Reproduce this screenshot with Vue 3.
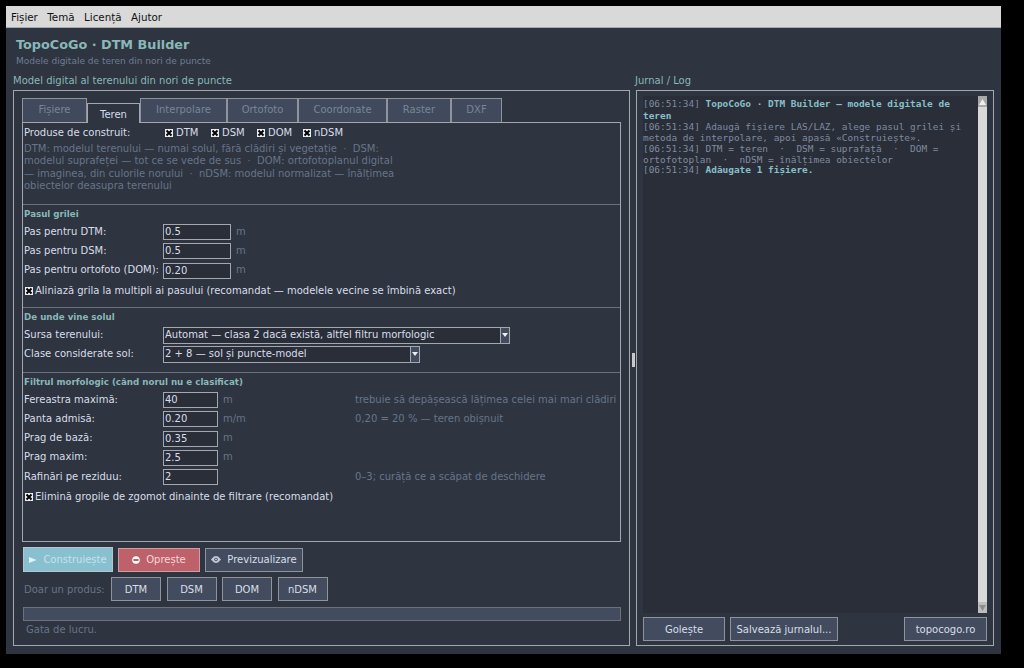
<template>
  <div class="window">
    <div class="menubar">
      <span v-for="m in menus" :key="m">{{ m }}</span>
    </div>

    <div class="header">
      <div class="title">TopoCoGo · DTM Builder</div>
      <div class="subtitle">Modele digitale de teren din nori de puncte</div>
    </div>

    <div class="columns">
      <!-- left side -->
      <div class="left-col">
        <div class="group-title">Model digital al terenului din nori de puncte</div>
        <div class="panel left-panel">
          <div class="tabs">
            <div
              v-for="t in tabs"
              :key="t.name"
              class="tab"
              :class="{ active: t.name === 'Teren' }"
              :style="{ width: t.w + 'px' }"
            >{{ t.name }}</div>
          </div>

          <div class="pane">
            <div class="section first">
              <div class="products">
                <span class="products-label">Produse de construit:</span>
                <label v-for="p in products" :key="p" class="check product">
                  <span class="box"><svg viewBox="0 0 8 8" width="8" height="8"><path d="M1.5 1.5l5 5M6.5 1.5l-5 5" stroke="#000" stroke-width="2" /></svg></span>{{ p }}
                </label>
              </div>
              <p class="desc">DTM: modelul terenului — numai solul, fără clădiri și vegetație &nbsp;·&nbsp; DSM: modelul suprafeței — tot ce se vede de sus &nbsp;·&nbsp; DOM: ortofotoplanul digital — imaginea, din culorile norului &nbsp;·&nbsp; nDSM: modelul normalizat — înălțimea obiectelor deasupra terenului</p>
            </div>

            <div class="section grid-section">
              <h4>Pasul grilei</h4>
              <div v-for="r in gridRows" :key="r.label" class="row">
                <span class="lbl">{{ r.label }}</span>
                <span class="input wide">{{ r.value }}</span>
                <span class="unit">m</span>
              </div>
              <label class="check line">
                <span class="box"><svg viewBox="0 0 8 8" width="8" height="8"><path d="M1.5 1.5l5 5M6.5 1.5l-5 5" stroke="#000" stroke-width="2" /></svg></span>Aliniază grila la multipli ai pasului (recomandat — modelele vecine se îmbină exact)
              </label>
            </div>

            <div class="section soil-section">
              <h4>De unde vine solul</h4>
              <div v-for="s in soilRows" :key="s.label" class="row">
                <span class="lbl">{{ s.label }}</span>
                <div class="select" :style="{ width: s.w + 'px' }">
                  <span class="select-text">{{ s.value }}</span>
                  <span class="select-arrow"><svg viewBox="0 0 6 4" width="6" height="4"><path d="M0 0h6L3 4z" fill="#eceff4" /></svg></span>
                </div>
              </div>
            </div>

            <div class="section last">
              <h4>Filtrul morfologic (când norul nu e clasificat)</h4>
              <div v-for="r in filterRows" :key="r.label" class="row">
                <span class="lbl">{{ r.label }}</span>
                <span class="input narrow">{{ r.value }}</span>
                <span class="unit fixed">{{ r.unit }}</span>
                <span class="hint">{{ r.hint }}</span>
              </div>
              <label class="check line">
                <span class="box"><svg viewBox="0 0 8 8" width="8" height="8"><path d="M1.5 1.5l5 5M6.5 1.5l-5 5" stroke="#000" stroke-width="2" /></svg></span>Elimină gropile de zgomot dinainte de filtrare (recomandat)
              </label>
            </div>
          </div>

          <div class="actions">
            <button class="btn build">
              <svg viewBox="0 0 8 8" width="8" height="8"><path d="M0 1l7.5 3L0 7z" fill="#e4f2f6" /></svg>
              Construiește
            </button>
            <button class="btn stop">
              <svg viewBox="0 0 8 8" width="8" height="8"><circle cx="4" cy="4" r="3.8" fill="#fff" /><rect x="1.5" y="3" width="5" height="2" fill="#bf616a" /></svg>
              Oprește
            </button>
            <button class="btn preview">
              <svg viewBox="0 0 10 7" width="10" height="7"><path d="M0 3.5C2 1 3.5 0 5 0s3 1 5 3.5C8 6 6.5 7 5 7S2 6 0 3.5z" fill="#c3cad6" /><circle cx="5" cy="3.5" r="1.8" fill="#4c566a" /><circle cx="5" cy="3.5" r="0.8" fill="#e5e9f0" /></svg>
              Previzualizare
            </button>
          </div>

          <div class="only">
            <span class="only-label">Doar un produs:</span>
            <button v-for="p in products" :key="p" class="btn small">{{ p }}</button>
          </div>

          <div class="progress"></div>
          <div class="status">Gata de lucru.</div>
        </div>
      </div>

      <div class="splitter"><span class="grip"></span></div>

      <!-- log side -->
      <div class="right-col">
        <div class="group-title log-title">Jurnal / Log</div>
        <div class="panel right-panel">
          <div class="log-wrap">
            <div class="log">
              <div class="log-line tall"><span>[06:51:34] </span><b>TopoCoGo · DTM Builder — modele digitale de teren</b></div>
              <div class="log-line gap">{{ logHelp }}</div>
              <div class="log-line">{{ logLegend }}</div>
              <div class="log-line"><span>[06:51:34] </span><b>Adăugate 1 fișiere.</b></div>
            </div>
            <div class="scrollbar">
              <span class="arrow up"><svg viewBox="0 0 7 6" width="7" height="6"><path d="M3.5 0L7 6H0z" fill="#eeeeee" /></svg></span>
              <span class="thumb"></span>
              <span class="arrow down"><svg viewBox="0 0 7 6" width="7" height="6"><path d="M0 0h7L3.5 6z" fill="#8d8d8d" /></svg></span>
            </div>
          </div>
          <div class="log-actions">
            <button class="btn clear">Golește</button>
            <button class="btn save">Salvează jurnalul...</button>
            <button class="btn site">topocogo.ro</button>
          </div>
        </div>
      </div>
    </div>
  </div>
</template>

<script setup>
const menus = ['Fișier', 'Temă', 'Licență', 'Ajutor']

const tabs = [
  { name: 'Fișiere', w: 65 },
  { name: 'Teren', w: 53 },
  { name: 'Interpolare', w: 87 },
  { name: 'Ortofoto', w: 71 },
  { name: 'Coordonate', w: 89 },
  { name: 'Raster', w: 64 },
  { name: 'DXF', w: 51 }
]

const products = ['DTM', 'DSM', 'DOM', 'nDSM']

const gridRows = [
  { label: 'Pas pentru DTM:', value: '0.5' },
  { label: 'Pas pentru DSM:', value: '0.5' },
  { label: 'Pas pentru ortofoto (DOM):', value: '0.20' }
]

const soilRows = [
  { label: 'Sursa terenului:', value: 'Automat — clasa 2 dacă există, altfel filtru morfologic', w: 347 },
  { label: 'Clase considerate sol:', value: '2 + 8 — sol și puncte-model', w: 257 }
]

const filterRows = [
  { label: 'Fereastra maximă:', value: '40', unit: 'm', hint: 'trebuie să depășească lățimea celei mai mari clădiri' },
  { label: 'Panta admisă:', value: '0.20', unit: 'm/m', hint: '0,20 = 20 % — teren obișnuit' },
  { label: 'Prag de bază:', value: '0.35', unit: 'm', hint: '' },
  { label: 'Prag maxim:', value: '2.5', unit: 'm', hint: '' },
  { label: 'Rafinări pe reziduu:', value: '2', unit: '', hint: '0–3; curăță ce a scăpat de deschidere' }
]

const logHelp = '[06:51:34] Adaugă fișiere LAS/LAZ, alege pasul grilei și metoda de interpolare, apoi apasă «Construiește».'
const logLegend = '[06:51:34] DTM = teren  ·  DSM = suprafață  ·  DOM = ortofotoplan  ·  nDSM = înălțimea obiectelor'
</script>

<style>
html, body {
  margin: 0;
  background: #000;
}
</style>

<style scoped>
.window {
  box-sizing: border-box;
  width: 995px;
  height: 648px;
  margin: 6px 0 0 6px;
  background: #2e3440;
  color: #d8dee9;
  font-family: "DejaVu Sans", sans-serif;
  font-size: 10px;
  overflow: hidden;
}
.menubar {
  box-sizing: border-box;
  height: 22px;
  background: #d9d9d9;
  border-bottom: 1px solid #a8a8a8;
  color: #111;
  display: flex;
  gap: 9.5px;
  align-items: center;
  padding-left: 5px;
  font-size: 10.3px;
}
.header {
  padding: 9px 0 0 10px;
}
.title {
  font-size: 12.8px;
  font-weight: 700;
  color: #88b8b8;
  line-height: 16px;
}
.subtitle {
  font-size: 9px;
  color: #6f7d93;
  line-height: 12px;
  margin-top: 2px;
}
.columns {
  display: flex;
  padding-left: 7px;
  margin-top: 8px;
}
.left-col {
  width: 617px;
}
.right-col {
  width: 358px;
}
.splitter {
  width: 6px;
  position: relative;
}
.grip {
  position: absolute;
  left: 2px;
  top: 278px;
  width: 3px;
  height: 14px;
  background: #c9c9c9;
}
.group-title {
  color: #88b8b8;
  line-height: 12px;
  height: 15px;
}
.log-title {
  margin-left: -1px;
}
.panel {
  box-sizing: border-box;
  height: 556px;
  border: 1px solid #a4a8ae;
}
.left-panel {
  padding: 7px 8px 0 8px;
}
.tabs {
  display: flex;
  height: 24px;
  align-items: flex-start;
}
.tab {
  box-sizing: border-box;
  height: 24px;
  background: #414a5c;
  border: 1px solid #8f949c;
  border-bottom: none;
  color: #77859a;
  text-align: center;
  line-height: 22px;
  flex: none;
}
.tab.active {
  height: 20px;
  margin-top: 5px;
  background: #2e3440;
  color: #d8dee9;
  border-color: #a4a8ae;
  line-height: 21px;
  position: relative;
  z-index: 1;
  margin-bottom: -1px;
}
.pane {
  box-sizing: border-box;
  height: 420px;
  border: 1px solid #a4a8ae;
}
.section {
  border-bottom: 1px solid #6c727d;
  padding: 0 1px;
}
.section.first {
  height: 81px;
}
.section.grid-section {
  height: 102px;
}
.section.soil-section {
  height: 64px;
}
.section.last {
  border-bottom: none;
}
.products {
  display: flex;
  align-items: center;
  height: 19px;
}
.products-label {
  width: 141px;
  flex: none;
}
.check {
  display: flex;
  align-items: center;
  gap: 2px;
}
.product {
  width: 46px;
  flex: none;
  gap: 3px;
}
.box {
  display: inline-flex;
  box-sizing: border-box;
  width: 8px;
  height: 8px;
  background: #eceff4;
  flex: none;
}
.desc {
  margin: 0;
  padding-top: 1px;
  color: #677589;
  line-height: 12.3px;
  width: 372px;
}
h4 {
  margin: 0;
  font-size: 8.7px;
  font-weight: 700;
  color: #88b8b8;
  height: 17.4px;
  line-height: 18px;
}
.row {
  display: flex;
  align-items: center;
  height: 19.3px;
}
.lbl {
  width: 139px;
  flex: none;
  white-space: nowrap;
  padding-bottom: 2px;
}
.input {
  box-sizing: border-box;
  height: 16px;
  background: #2a2e39;
  border: 1px solid #a4a8ae;
  padding-left: 1px;
  line-height: 14px;
  flex: none;
}
.input.wide {
  width: 68px;
}
.input.narrow {
  width: 55px;
}
.unit {
  color: #677589;
  margin-left: 5px;
  padding-bottom: 2px;
}
.unit.fixed {
  width: 132px;
  flex: none;
}
.hint {
  color: #677589;
  white-space: nowrap;
  padding-bottom: 2px;
}
.line {
  height: 21px;
  padding-left: 1px;
}
.last .line {
  height: 20px;
}
.select {
  box-sizing: border-box;
  height: 17px;
  background: #2a2e39;
  border: 1px solid #a4a8ae;
  display: flex;
  align-items: center;
  flex: none;
}
.select-text {
  flex: 1;
  padding: 0 0 1px 1px;
}
.select-arrow {
  box-sizing: border-box;
  width: 9px;
  height: 100%;
  background: #434c5e;
  border-left: 1px solid #a4a8ae;
  display: flex;
  align-items: center;
  justify-content: center;
}
.actions {
  display: flex;
  align-items: center;
  gap: 5px;
  height: 25px;
  margin-top: 5px;
  padding-left: 1px;
}
.btn {
  box-sizing: border-box;
  font: inherit;
  background: #3b4252;
  color: #d8dee9;
  border: 1px solid #8f949c;
  padding: 0;
  height: 24px;
  display: inline-flex;
  align-items: center;
  justify-content: center;
  gap: 6px;
}
.build {
  width: 90px;
  height: 25px;
  background: #88c0d0;
  border-color: #b6c6cc;
  color: #c5e2ea;
}
.stop {
  width: 82px;
  background: #bf616a;
  border-color: #c9a0a4;
  color: #f0d8da;
}
.preview {
  width: 98px;
  background: #434c5e;
}
.only {
  display: flex;
  align-items: center;
  height: 24px;
  margin-top: 5px;
  padding-left: 2px;
  gap: 5.5px;
}
.only-label {
  width: 81.5px;
  flex: none;
  color: #677589;
}
.small {
  width: 50px;
  background: #434c5e;
}
.progress {
  box-sizing: border-box;
  height: 14px;
  margin: 6px 0 0 1px;
  width: 598px;
  background: #434c5e;
  border: 1px solid #6c727d;
}
.status {
  color: #677589;
  padding: 2px 0 0 4px;
  line-height: 13px;
}
.right-panel {
  padding: 5px 6px 0 6px;
  display: flex;
  flex-direction: column;
}
.log-wrap {
  display: flex;
  height: 517px;
  background: #2a2e38;
}
.log {
  flex: 1;
  font-family: "DejaVu Sans Mono", monospace;
  font-size: 9.45px;
  color: #7f8ba0;
  padding-top: 2px;
  white-space: pre-wrap;
}
.log-line {
  line-height: 10.7px;
}
.log-line.gap {
  margin-top: 0.8px;
}
.log-line b {
  color: #88c0c8;
}
.log-line.tall {
  line-height: 11.8px;
}
.scrollbar {
  width: 9px;
  background: #d9d9d9;
  display: flex;
  flex-direction: column;
}
.arrow {
  height: 11px;
  display: flex;
  align-items: center;
  justify-content: center;
  flex: none;
}
.arrow.up {
  background: #a9a9a9;
}
.arrow.down {
  background: #bdbdbd;
}
.thumb {
  flex: 1;
  background: #d9d9d9;
}
.log-actions {
  display: flex;
  margin-top: 4px;
  gap: 5px;
}
.clear {
  width: 82px;
  background: #434c5e;
}
.save {
  width: 108px;
  background: #434c5e;
}
.site {
  width: 83px;
  margin-left: auto;
  background: #434c5e;
}
</style>
